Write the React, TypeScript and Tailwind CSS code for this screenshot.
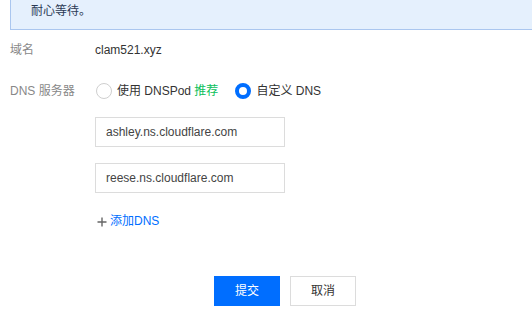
import React from "react";

const font = { fontFamily: '"Liberation Sans", Arial, "Noto Sans CJK SC", sans-serif' };

function Radio({ checked }: { checked?: boolean }) {
  return checked ? (
    <span className="block w-4 h-4 rounded-full border-[4px] border-[#006eff] bg-white box-border shrink-0" />
  ) : (
    <span className="block w-4 h-4 rounded-full border border-[#cfcfcf] bg-white box-border shrink-0" />
  );
}

export default function App() {
  return (
    <div className="w-[532px] h-[316px] bg-white overflow-hidden text-[12px] leading-[18px]" style={font}>
      <div className="ml-[10px] h-[30px] bg-[#e5f0fd] border-l border-b border-[#aac6ef] pl-[20px] pt-[2px] text-[#2b3a55]">
        耐心等待。
      </div>

      <div className="flex mt-[11px] h-[18px]">
        <div className="w-[95px] pl-[10px] text-[#888]">域名</div>
        <div className="text-[#333]">clam521.xyz</div>
      </div>

      <div className="flex mt-[22px] items-center h-[20px]">
        <div className="w-[95px] pl-[10px] text-[#888]">DNS 服务器</div>
        <div className="flex items-center">
          <span className="ml-[1px]"><Radio /></span>
          <span className="ml-[5px] text-[#333]">
            使用 DNSPod <span className="text-[#0abf5b]">推荐</span>
          </span>
          <span className="ml-[17px]"><Radio checked /></span>
          <span className="ml-[5px] text-[#333]">自定义 DNS</span>
        </div>
      </div>

      <div className="ml-[95px] mt-[16px] flex flex-col gap-[16px]">
        <div className="w-[190px] h-[30px] border border-[#dcdcdc] flex items-center pl-[10px] text-[#444]">
          ashley.ns.cloudflare.com
        </div>
        <div className="w-[190px] h-[30px] border border-[#dcdcdc] flex items-center pl-[10px] text-[#444]">
          reese.ns.cloudflare.com
        </div>
      </div>

      <div className="ml-[97px] mt-[19px] flex items-center h-[18px]">
        <svg width="10" height="10" viewBox="0 0 10 10" className="mt-[2px]">
          <path d="M5 0.5V9.5M0.5 5H9.5" stroke="#666" strokeWidth="1.4" />
        </svg>
        <span className="ml-[3px] text-[#006eff]">添加DNS</span>
      </div>

      <div className="ml-[214px] mt-[46px] flex gap-[10px]">
        <button className="w-[66px] h-[30px] bg-[#006eff] text-white flex items-center justify-center">提交</button>
        <button className="w-[66px] h-[30px] border border-[#dcdcdc] bg-white text-[#333] flex items-center justify-center">取消</button>
      </div>
    </div>
  );
}
